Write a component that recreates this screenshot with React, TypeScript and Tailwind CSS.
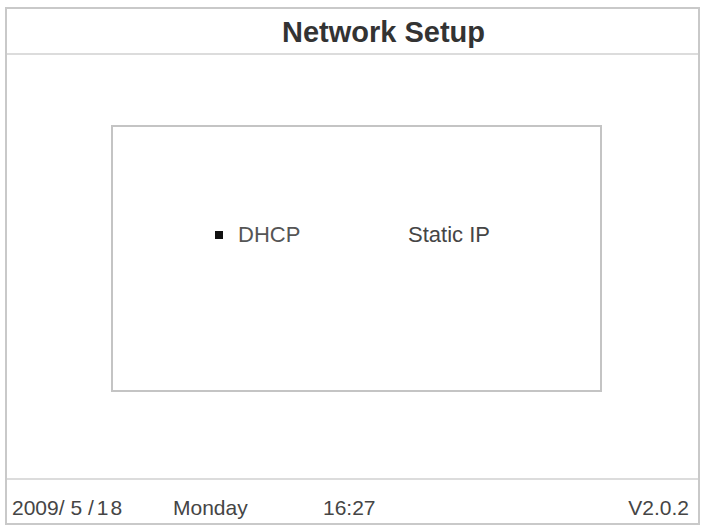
import React from 'react';

const font = { fontFamily: '"Liberation Sans", Arial, sans-serif' };

function Footer() {
  return (
    <div className="flex h-[43px] items-start pt-[16px] pl-[5px] pr-[9px] text-[21px] leading-[24px] text-[#454545]">
      <span className="flex w-[161px] whitespace-pre">
        <span>2009/ 5 /</span>
        <span className="ml-[3px] tracking-[2px]">18</span>
      </span>
      <span className="w-[150px]">Monday</span>
      <span>16:27</span>
      <span className="ml-auto">V2.0.2</span>
    </div>
  );
}

export default function App() {
  return (
    <div className="h-[526px] w-[703px] bg-white pt-[7px] pl-[5px]" style={font}>
      <div className="flex h-[518px] w-[695px] flex-col border-2 border-[#c9c9c9]">
        <div className="flex h-[46px] items-center justify-center border-b-2 border-[#dcdcdc] pt-[2px] pl-[62px] text-[29px] font-bold leading-[44px] text-[#333]">
          Network Setup
        </div>

        <div className="flex-1 pt-[70px] pl-[104px]">
          <div className="h-[267px] w-[491px] border-2 border-[#c4c4c4] pt-[95px] pl-[102px]">
            <div className="flex items-center text-[22px] leading-[26px]">
              <span className="mr-[15px] h-[8px] w-[8px] bg-[#111]" />
              <span className="w-[170px] text-[#555]">DHCP</span>
              <span className="text-[#454545]">Static IP</span>
            </div>
          </div>
        </div>

        <div className="border-t-2 border-[#dcdcdc]">
          <Footer />
        </div>
      </div>
    </div>
  );
}
